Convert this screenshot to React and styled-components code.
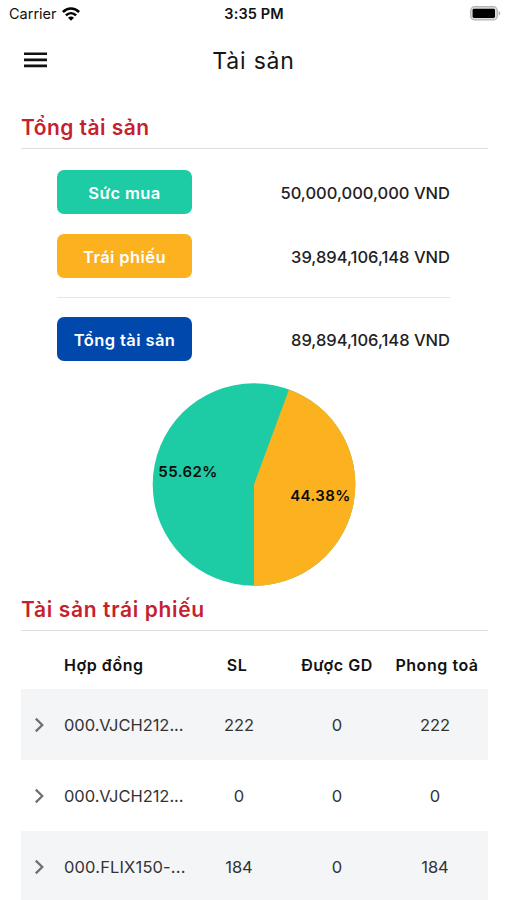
import React from 'react';
import styled, { createGlobalStyle } from 'styled-components';

const BONDS = [
  { id: 1, name: '000.VJCH212...', track: '-0.05px', total: '222', available: '0', blocked: '222' },
  { id: 2, name: '000.VJCH212...', track: '-0.05px', total: '0', available: '0', blocked: '0' },
  { id: 3, name: '000.FLIX150-...', track: '0.15px', total: '184', available: '0', blocked: '184' },
];

const WifiIcon = () => (
  <svg width="18" height="14" viewBox="0 0 18 14" fill="none" stroke="#000" strokeWidth="2.6">
    <path d="M0.9 5 C5.6 0.3 12.4 0.3 17.1 5" />
    <path d="M3.9 8.4 C6.9 5.5 11.1 5.5 14.1 8.4" />
    <path d="M9 13.8 L6 10.8 C7.8 9.2 10.2 9.2 12 10.8 Z" fill="#000" stroke="none" />
  </svg>
);

const BatteryIcon = () => (
  <svg width="31" height="15" viewBox="0 0 31 15">
    <rect x="0.7" y="0.7" width="26.6" height="13.2" rx="4" fill="#ddd" stroke="#b4b4b4" strokeWidth="1.3" />
    <rect x="2.6" y="2.8" width="22.4" height="9.2" rx="1.4" fill="#000" />
    <path d="M28.6 5 C31 5.7 31 9 28.6 9.6 Z" fill="#b4b4b4" />
  </svg>
);

const MenuIcon = () => (
  <svg width="23" height="17" viewBox="0 0 23 17" stroke="#111" strokeWidth="2.6">
    <path d="M0 1.8H23M0 7.9H23M0 13.9H23" />
  </svg>
);

const ChevronIcon = () => (
  <svg width="10" height="16" viewBox="0 0 10 16" fill="none" stroke="#6d6e71" strokeWidth="2.2">
    <path d="M0.8 1.6 L7.3 8 L0.8 14.4" />
  </svg>
);

export default function App() {
  return (
    <>
      <GlobalStyle />
      <Screen>
        <StatusBar>
          <Carrier>
            Carrier
            <WifiIcon />
          </Carrier>
          <Clock>3:35 PM</Clock>
          <Battery>
            <BatteryIcon />
          </Battery>
        </StatusBar>

        <NavBar>
          <MenuButton aria-label="Menu">
            <MenuIcon />
          </MenuButton>
          <PageTitle>Tài sản</PageTitle>
        </NavBar>

        <SectionTitle $top="10px" $track="0.45px">Tổng tài sản</SectionTitle>
        <Summary>
          <AssetRow>
            <AssetLabel $color="#1dcca5">Sức mua</AssetLabel>
            <Amount>50,000,000,000 VND</Amount>
          </AssetRow>
          <AssetRow>
            <AssetLabel $color="#fcb11f">Trái phiếu</AssetLabel>
            <Amount>39,894,106,148 VND</Amount>
          </AssetRow>
          <Divider />
          <AssetRow>
            <AssetLabel $color="#0048ac">Tổng tài sản</AssetLabel>
            <Amount>89,894,106,148 VND</Amount>
          </AssetRow>
        </Summary>

        <PieChart viewBox="0 0 204 204">
          <circle cx="102" cy="102.5" r="101.3" fill="#1dcca5" />
          <path d="M102 102.5 V203.8 A101.3 101.3 0 0 0 137 7.4 Z" fill="#fcb11f" />
          <PieLabel x="36" y="95">55.62%</PieLabel>
          <PieLabel x="168.5" y="119">44.38%</PieLabel>
        </PieChart>

        <SectionTitle $track="0.65px">Tài sản trái phiếu</SectionTitle>
        <Table>
          <HeadRow>
            <span />
            <HeadCell $align="left">Hợp đồng</HeadCell>
            <HeadCell $shift="4px">SL</HeadCell>
            <HeadCell>Được GD</HeadCell>
            <HeadCell>Phong toả</HeadCell>
          </HeadRow>
          {BONDS.map((bond, index) => (
            <BondRow key={bond.id} $striped={index % 2 === 0}>
              <Expand>
                <ChevronIcon />
              </Expand>
              <Cell $align="left" $track={bond.track}>{bond.name}</Cell>
              <Cell>{bond.total}</Cell>
              <Cell>{bond.available}</Cell>
              <Cell>{bond.blocked}</Cell>
            </BondRow>
          ))}
        </Table>
      </Screen>
    </>
  );
}

const GlobalStyle = createGlobalStyle`
  * {
    box-sizing: border-box;
  }
  body {
    margin: 0;
    background: #fff;
    overflow: hidden;
  }
`;

const Screen = styled.main`
  width: 507px;
  height: 900px;
  overflow: hidden;
  background: #fff;
  color: #222;
  font-family: Inter, 'Noto Sans', sans-serif;
`;

const StatusBar = styled.div`
  display: grid;
  grid-template-columns: 1fr auto 1fr;
  align-items: center;
  height: 27px;
  padding: 0 6px 0 9px;
  color: #111;
  font-size: 14.5px;
`;

const Carrier = styled.div`
  display: flex;
  align-items: center;
  gap: 5px;
`;

const Clock = styled.div`
  margin-right: 2px;
  font-weight: 600;
  letter-spacing: 0.1px;
`;

const Battery = styled.div`
  display: flex;
  justify-content: flex-end;
`;

const NavBar = styled.header`
  display: grid;
  grid-template-columns: 60px 1fr 60px;
  align-items: center;
  height: 67px;
`;

const MenuButton = styled.button`
  display: flex;
  margin-left: 24px;
  padding: 0;
  border: 0;
  background: none;
`;

const PageTitle = styled.h1`
  margin: 0;
  color: #151515;
  font-size: 23px;
  font-weight: 400;
  letter-spacing: 0.8px;
  text-align: center;
`;

const SectionTitle = styled.h2`
  height: 45px;
  margin: ${(props) => props.$top || '0'} 19px 0 21px;
  padding: 0;
  border-bottom: 1px solid #dfdfdf;
  color: #c61f30;
  font-size: 21px;
  font-weight: 600;
  line-height: 47px;
  letter-spacing: ${(props) => props.$track};
`;

const Summary = styled.section`
  display: flex;
  flex-direction: column;
  gap: 19.5px;
  margin: 21.4px 57px 0;
`;

const AssetRow = styled.div`
  display: flex;
  align-items: center;
  justify-content: space-between;
  height: 44px;
`;

const AssetLabel = styled.div`
  width: 135px;
  height: 44px;
  border-radius: 7px;
  background: ${(props) => props.$color};
  color: #fff;
  font-size: 16.5px;
  font-weight: 600;
  line-height: 46px;
  letter-spacing: 0.4px;
  text-align: center;
`;

const Amount = styled.div`
  padding-top: 2px;
  font-size: 16.5px;
  font-weight: 500;
`;

const Divider = styled.div`
  height: 1px;
  margin: -0.5px 0;
  background: #e6e6e6;
`;

const PieChart = styled.svg`
  display: block;
  width: 204px;
  height: 204px;
  margin: 21px auto 0;
`;

const PieLabel = styled.text`
  fill: #0b0b0b;
  font-size: 15px;
  font-weight: 600;
  letter-spacing: 0.4px;
  text-anchor: middle;
`;

const Table = styled.section`
  margin: 0 19px 0 21px;
`;

const HeadRow = styled.div`
  display: grid;
  grid-template-columns: 43px 126px 98px 98px 102px;
  align-items: center;
  height: 58px;
  padding-top: 11px;
`;

const HeadCell = styled.div`
  padding-right: ${(props) => props.$shift || '0'};
  color: #111;
  font-size: 16px;
  font-weight: 600;
  letter-spacing: 0.55px;
  text-align: ${(props) => props.$align || 'center'};
  white-space: nowrap;
`;

const BondRow = styled.div`
  display: grid;
  grid-template-columns: 43px 126px 98px 98px 98px;
  align-items: center;
  height: 71px;
  padding-top: 2px;
  background: ${(props) => (props.$striped ? '#f4f5f7' : '#fff')};
`;

const Expand = styled.div`
  display: flex;
  padding-left: 14px;
`;

const Cell = styled.div`
  color: #333;
  font-size: 16.5px;
  letter-spacing: ${(props) => props.$track || '0'};
  text-align: ${(props) => props.$align || 'center'};
  white-space: nowrap;
`;
